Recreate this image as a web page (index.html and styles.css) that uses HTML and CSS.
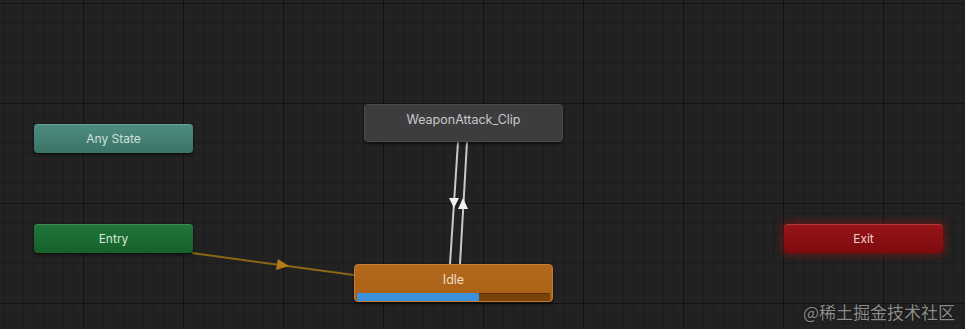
FILE: index.html
```html
<!DOCTYPE html>
<html lang="zh-CN">
<head>
  <meta charset="UTF-8">
  <title>Animator</title>
  <link rel="stylesheet" href="styles.css">
</head>
<body>
  <div class="graph">
    <svg class="links" width="965" height="329" viewBox="0 0 965 329">
      <!-- Entry -> Idle -->
      <line x1="192" y1="253" x2="354" y2="275" class="link-default"/>
      <polygon points="289,266 278,259 276,270" class="arrow-default"/>
      <!-- WeaponAttack_Clip <-> Idle -->
      <line x1="458" y1="142" x2="450" y2="264" class="link"/>
      <line x1="467" y1="142" x2="460" y2="264" class="link"/>
      <polygon points="449,198 459,198 454,208" class="arrow"/>
      <polygon points="463,198 458,209 468,209" class="arrow"/>
    </svg>

    <div class="node any-state" style="left:34px;top:124px">Any State</div>
    <div class="node entry" style="left:34px;top:224px">Entry</div>
    <div class="node exit" style="left:784px;top:224px">Exit</div>
    <div class="node state clip" style="left:364px;top:104px">WeaponAttack_Clip</div>
    <div class="node state idle" style="left:354px;top:264px">
      Idle
      <div class="progress"><div class="progress-fill" style="width:63%"></div></div>
    </div>

    <div class="watermark">@稀土掘金技术社区</div>
  </div>
</body>
</html>
```

FILE: styles.css
```css
body {
  margin: 0;
  background: #212121;
  font-family: Inter, "Noto Sans", sans-serif;
}
.graph {
  position: relative;
  width: 965px;
  height: 329px;
  overflow: hidden;
  background-color: #222222;
  background-image:
    linear-gradient(to right, #131313 1px, transparent 1px),
    linear-gradient(to bottom, #131313 1px, transparent 1px),
    linear-gradient(to right, #1d1d1d 1px, transparent 1px),
    linear-gradient(to bottom, #1d1d1d 1px, transparent 1px);
  background-size: 100px 100%, 100% 100px, 10px 100%, 100% 10px;
  background-position: 83px 0, 0 3px, 3px 0, 0 3px;
}
.links {
  position: absolute;
  left: 0;
  top: 0;
}
.link-default {
  stroke: #8a6716;
  stroke-width: 2;
}
.arrow-default {
  fill: #b47a16;
}
.link {
  stroke: #c9c9c9;
  stroke-width: 2;
}
.arrow {
  fill: #f2f2f2;
}
.node {
  position: absolute;
  width: 159px;
  height: 29px;
  box-sizing: border-box;
  border-radius: 4px;
  font-size: 12px;
  line-height: 29px;
  text-align: center;
  color: #d4dedb;
  box-shadow: 0 2px 3px rgba(0,0,0,0.55);
}
.any-state {
  background: linear-gradient(#4d8d7f, #3a7266);
  border-top: 1px solid #6aa293;
  line-height: 27px;
  color: #cfe0db;
}
.entry {
  background: linear-gradient(#21763a, #14612a);
  border-top: 1px solid #3b8c52;
  line-height: 27px;
  color: #d6e6d8;
}
.exit {
  background: linear-gradient(#961518, #7e0b0e);
  border-top: 1px solid #b0383a;
  line-height: 27px;
  color: #ecd4d4;
  box-shadow: 0 0 8px 2px rgba(160,20,20,0.55);
}
.state {
  width: 199px;
  height: 38px;
  line-height: 16px;
  padding-top: 7px;
}
.clip {
  background: #3d3d3f;
  border: 1px solid #4a4a4c;
  color: #c9c9c9;
  font-size: 12.5px;
}
.idle {
  background: linear-gradient(#b36a1d, #a95e14);
  border: 1px solid #c27c34;
  color: #f0dcc8;
  font-size: 12.5px;
  padding-left: 2px;
  padding-right: 2px;
}
.progress {
  margin-top: 5px;
  height: 8px;
  background: #7a4307;
  border-radius: 1px;
  box-shadow: inset 0 1px 1px rgba(0,0,0,0.3);
}
.progress-fill {
  height: 100%;
  background: #3b92dc;
  border-radius: 1px;
}
.watermark {
  position: absolute;
  right: 10px;
  bottom: 7px;
  font-family: "Noto Sans CJK SC", sans-serif;
  font-size: 17px;
  line-height: 20px;
  color: #8c8c8c;
  text-shadow: 0 0 1px #111, 0 0 1px #111;
}
```
